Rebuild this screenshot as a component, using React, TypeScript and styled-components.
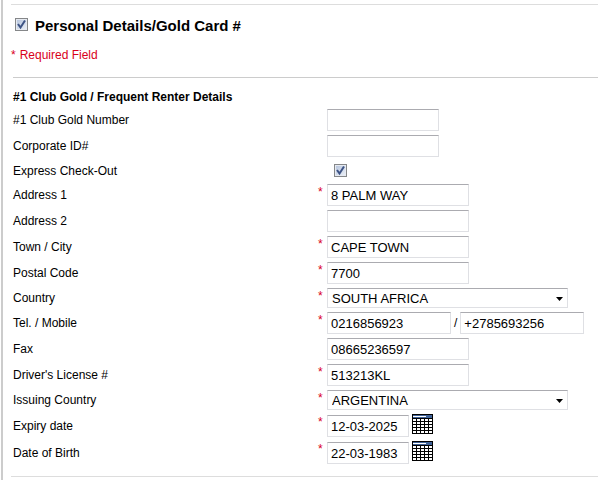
import React from "react";
import type { ReactNode } from "react";
import styled, { createGlobalStyle } from "styled-components";

const GlobalStyle = createGlobalStyle`
  * { box-sizing: border-box; }
  body {
    margin: 0;
    background: #fff;
    color: #000;
    font-family: "Liberation Sans", Arial, sans-serif;
    font-size: 12px;
    line-height: 14px;
  }
`;

const Page = styled.main`
  margin-left: 1px;
  padding: 4px 0 3px 8px;
  border-left: 2px solid #ccc;
`;

const Panel = styled.form`
  border-top: 1px solid #ddd;
  border-bottom: 1px solid #ddd;
  padding-bottom: 12px;
`;

const Header = styled.header`
  display: flex;
  align-items: flex-start;
  gap: 7px;
  padding: 11px 0 0 4px;

  > span { margin-top: 2px; }
`;

const Title = styled.h1`
  margin: 0;
  font-size: 15px;
  line-height: 20px;
`;

const Required = styled.p`
  display: flex;
  gap: 4px;
  margin: 12px 0 0;
  color: #d9001b;
`;

const Section = styled.section`
  margin: 15px 0 0 2px;
  padding-top: 12px;
  border-top: 1px solid #ccc;
`;

const SectionTitle = styled.h2`
  margin: 0 0 5px;
  font-size: 12px;
  line-height: 14px;
`;

const Fields = styled.div`
  display: flex;
  flex-direction: column;
  gap: 4px;
`;

const Row = styled.div`
  display: grid;
  grid-template-columns: 305px 9px 1fr;
  align-items: center;
`;

const Label = styled.label`
  white-space: nowrap;
`;

const Star = styled.span`
  align-self: start;
  padding-top: 1px;
  color: #d9001b;
`;

const Controls = styled.div`
  display: flex;
  align-items: center;
  gap: 3px;
`;

const DateControls = styled(Controls)`
  align-items: flex-end;
  height: 23px;
`;

const CheckControls = styled(Controls)`
  align-items: flex-start;
  height: 19px;
  padding: 3px 0 0 7px;
`;

const widths = { short: 112, normal: 142, phone: 124, date: 82 };

const TextBox = styled.input<{ $size: keyof typeof widths }>`
  width: ${(p) => widths[p.$size]}px;
  height: 22px;
  padding: 1px 3px 0;
  border: 1px solid #dfe0e4;
  border-top-color: #ababb0;
  background: #fff;
  color: #000;
  font-family: inherit;
  font-size: 13px;
`;

const SelectWrap = styled.div`
  display: grid;
  align-items: center;
  width: 241px;

  > * { grid-area: 1 / 1; }
  > svg { justify-self: end; margin: 2px 5px 0 0; pointer-events: none; }
`;

const SelectBox = styled.select`
  width: 100%;
  height: 20px;
  padding: 0 20px 0 4px;
  appearance: none;
  border: 1px solid #dfe0e4;
  border-top-color: #ababb0;
  border-radius: 0;
  background: #fff;
  color: #000;
  font-family: inherit;
  font-size: 13px;
`;

const CheckWrap = styled.span`
  display: grid;
  width: 13px;
  height: 13px;

  > * { grid-area: 1 / 1; }
  > svg { pointer-events: none; visibility: hidden; }
  > input:checked + svg { visibility: visible; }
`;

const CheckInput = styled.input`
  width: 13px;
  height: 13px;
  margin: 0;
  appearance: none;
  border: 1px solid #858789;
  background: linear-gradient(135deg, #b3c2dc, #eef2f8);
  box-shadow: inset 0 0 0 1px #e6eaf1;
`;

const IconButton = styled.button`
  display: block;
  height: 23px;
  padding: 0 0 3px;
  border: 0;
  background: none;

  > svg { display: block; }
`;

function CheckBox({ id }: { id: string }) {
  return (
    <CheckWrap>
      <CheckInput type="checkbox" id={id} defaultChecked />
      <svg width="13" height="13" viewBox="0 0 13 13" aria-hidden="true">
        <path d="M3 6 5.5 9.5 10 2.5" fill="none" stroke="#3d5385" strokeWidth="2" />
      </svg>
    </CheckWrap>
  );
}

function CalendarButton({ label }: { label: string }) {
  return (
    <IconButton type="button" aria-label={label}>
      <svg width="21" height="20" viewBox="0 0 21 20" shapeRendering="crispEdges" aria-hidden="true">
        <path fill="#000" d="M0 0h21v20H0z" />
        <path fill="#3f6298" d="M1 1h19v3H1z" />
        <path fill="#fff" d="M1 2h13v1H1z" />
        {[5, 8, 11, 14, 17].map((y) =>
          [1, 5, 9, 13, 17].map((x) => (
            <path key={`${x}-${y}`} fill="#fff" d={`M${x} ${y}h3v2h-3z`} />
          )),
        )}
      </svg>
    </IconButton>
  );
}

function Field({ id, label, required, children }: {
  id: string;
  label: string;
  required?: boolean;
  children: ReactNode;
}) {
  return (
    <Row>
      <Label htmlFor={id}>{label}</Label>
      <Star>{required ? "*" : ""}</Star>
      {children}
    </Row>
  );
}

interface TextFieldProps {
  id: string;
  label: string;
  value?: string;
  required?: boolean;
  size?: keyof typeof widths;
}

function TextField({ id, label, value = "", required, size = "normal" }: TextFieldProps) {
  return (
    <Field id={id} label={label} required={required}>
      <Controls><TextBox id={id} type="text" $size={size} defaultValue={value} /></Controls>
    </Field>
  );
}

function SelectField({ id, label, value }: { id: string; label: string; value: string }) {
  return (
    <Field id={id} label={label} required>
      <SelectWrap>
        <SelectBox id={id} defaultValue={value}>
          <option>{value}</option>
        </SelectBox>
        <svg width="7" height="4" viewBox="0 0 7 4" aria-hidden="true">
          <path d="M0 0h7L3.5 4z" />
        </svg>
      </SelectWrap>
    </Field>
  );
}

function DateField({ id, label, value }: { id: string; label: string; value: string }) {
  return (
    <Field id={id} label={label} required>
      <DateControls>
        <TextBox id={id} type="text" $size="date" defaultValue={value} />
        <CalendarButton label={`Choose ${label}`} />
      </DateControls>
    </Field>
  );
}

export default function App() {
  return (
    <>
      <GlobalStyle />
      <Page>
        <Panel>
          <Header>
            <CheckBox id="personal" />
            <Title><label htmlFor="personal">Personal Details/Gold Card #</label></Title>
          </Header>
          <Required><span>*</span><span>Required Field</span></Required>
          <Section>
            <SectionTitle>#1 Club Gold / Frequent Renter Details</SectionTitle>
            <Fields>
              <TextField id="club" label="#1 Club Gold Number" size="short" />
              <TextField id="corporate" label="Corporate ID#" size="short" />
              <Field id="express" label="Express Check-Out">
                <CheckControls><CheckBox id="express" /></CheckControls>
              </Field>
              <TextField id="address1" label="Address 1" value="8 PALM WAY" required />
              <TextField id="address2" label="Address 2" />
              <TextField id="town" label="Town / City" value="CAPE TOWN" required />
              <TextField id="postal" label="Postal Code" value="7700" required />
              <SelectField id="country" label="Country" value="SOUTH AFRICA" />
              <Field id="tel" label="Tel. / Mobile" required>
                <Controls>
                  <TextBox id="tel" type="tel" $size="phone" defaultValue="0216856923" />
                  <span>/</span>
                  <TextBox type="tel" aria-label="Mobile" $size="phone" defaultValue="+2785693256" />
                </Controls>
              </Field>
              <TextField id="fax" label="Fax" value="08665236597" />
              <TextField id="license" label="Driver's License #" value="513213KL" required />
              <SelectField id="issuing" label="Issuing Country" value="ARGENTINA" />
              <DateField id="expiry" label="Expiry date" value="12-03-2025" />
              <DateField id="birth" label="Date of Birth" value="22-03-1983" />
            </Fields>
          </Section>
        </Panel>
      </Page>
    </>
  );
}
